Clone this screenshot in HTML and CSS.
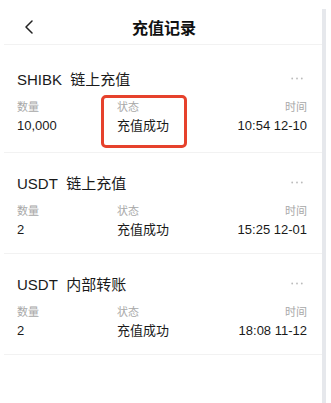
FILE: index.html
```html
<!DOCTYPE html>
<html lang="zh">
<head>
<meta charset="utf-8">
<link rel="stylesheet" href="styles.css">
</head>
<body>
<div class="screen">
  <div class="main">
    <header class="nav">
      <svg class="back" width="10" height="14" viewBox="0 0 10 14"><path d="M8 1 L2 7 L8 13" fill="none" stroke="#222" stroke-width="1.5" stroke-linecap="round" stroke-linejoin="round"/></svg>
      <h1 class="title">充值记录</h1>
    </header>
    <section class="card first">
      <div class="card-head">
        <span class="name">SHIBK&nbsp; 链上充值</span>
        <svg class="more" width="12" height="3" viewBox="0 0 12 3"><circle cx="1.2" cy="1.5" r="0.9" fill="#bbb"/><circle cx="6" cy="1.5" r="0.9" fill="#bbb"/><circle cx="10.8" cy="1.5" r="0.9" fill="#bbb"/></svg>
      </div>
      <div class="grid">
        <span class="label">数量</span><span class="label">状态</span><span class="label right">时间</span>
        <span class="value">10,000</span><span class="value">充值成功</span><span class="value right">10:54 12-10</span>
      </div>
    </section>
    <section class="card">
      <div class="card-head">
        <span class="name">USDT&nbsp; 链上充值</span>
        <svg class="more" width="12" height="3" viewBox="0 0 12 3"><circle cx="1.2" cy="1.5" r="0.9" fill="#bbb"/><circle cx="6" cy="1.5" r="0.9" fill="#bbb"/><circle cx="10.8" cy="1.5" r="0.9" fill="#bbb"/></svg>
      </div>
      <div class="grid">
        <span class="label">数量</span><span class="label">状态</span><span class="label right">时间</span>
        <span class="value">2</span><span class="value">充值成功</span><span class="value right">15:25 12-01</span>
      </div>
    </section>
    <section class="card">
      <div class="card-head">
        <span class="name">USDT&nbsp; 内部转账</span>
        <svg class="more" width="12" height="3" viewBox="0 0 12 3"><circle cx="1.2" cy="1.5" r="0.9" fill="#bbb"/><circle cx="6" cy="1.5" r="0.9" fill="#bbb"/><circle cx="10.8" cy="1.5" r="0.9" fill="#bbb"/></svg>
      </div>
      <div class="grid">
        <span class="label">数量</span><span class="label">状态</span><span class="label right">时间</span>
        <span class="value">2</span><span class="value">充值成功</span><span class="value right">18:08 11-12</span>
      </div>
    </section>
  </div>
  <div class="rail"></div>
  <div class="highlight"></div>
</div>
</body>
</html>
```

FILE: styles.css
```css
* { box-sizing: border-box; margin: 0; padding: 0; }
html, body { background: #fff; }
body {
  font-family: "Liberation Sans", "Noto Sans CJK SC", sans-serif;
  color: #1a1a1a;
  width: 331px;
  height: 403px;
  overflow: hidden;
}
.screen {
  position: relative;
  display: flex;
  height: 403px;
  padding-right: 5px;
}
.main {
  flex: 1;
  padding-left: 4px;
}
.rail {
  width: 4px;
  margin-top: 9px;
  background: #e6e8ec;
}
.nav {
  height: 45px;
  border-bottom: 1px solid #f2f2f2;
  display: flex;
  align-items: center;
  justify-content: center;
  position: relative;
}
.back {
  position: absolute;
  left: 20px;
  top: 20px;
}
.title {
  font-size: 16px;
  font-weight: bold;
  color: #111;
  margin-top: 9px;
  margin-left: 2px;
}
.card {
  padding: 19px 15px 14px 13px;
  border-bottom: 1px solid #f2f2f2;
}
.card.first { padding-top: 23px; padding-bottom: 17px; }
.card-head {
  display: flex;
  justify-content: space-between;
  align-items: center;
  height: 20px;
}
.name {
  font-size: 15px;
  color: #1a1a1a;
}
.more { margin-right: 4px; }
.grid {
  display: grid;
  grid-template-columns: 100px 1fr auto;
  margin-top: 11px;
  row-gap: 2px;
}
.label {
  font-size: 11px;
  line-height: 16px;
  color: #a8a8a8;
}
.value {
  font-size: 13px;
  line-height: 18px;
  color: #1a1a1a;
}
.right { text-align: right; }
.highlight {
  position: absolute;
  left: 101px;
  top: 95px;
  width: 86px;
  height: 53px;
  border: 3px solid #e6412c;
  border-radius: 5px;
}
```
